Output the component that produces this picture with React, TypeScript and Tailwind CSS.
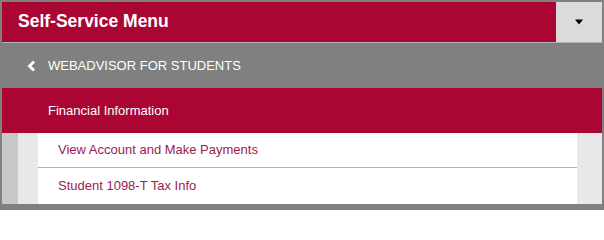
const links = ["View Account and Make Payments", "Student 1098-T Tax Info"];

export default function App() {
  return (
    <div className="w-[604px] h-[210px] bg-[#808080] pt-[2px] px-[2px] font-['Liberation_Sans',Arial,sans-serif] overflow-hidden">
      <div className="flex h-[40px]">
        <div className="flex-1 bg-[#ab0534] flex items-center pl-[16px]">
          <span className="text-white font-bold text-[17.5px] leading-none">Self-Service Menu</span>
        </div>
        <button className="w-[46px] bg-[#dbdbdb] flex items-center justify-center">
          <svg width="10" height="6" viewBox="0 0 10 6">
            <path d="M1 0.5 L9 0.5 L5 5.5 Z" fill="#000" />
          </svg>
        </button>
      </div>
      <div className="h-px bg-[#b4b4b4]" />
      <div className="h-[45px] bg-[#808080] flex items-center pl-[25px] text-white text-[13px]">
        <svg width="9" height="12" viewBox="0 0 9 12" className="mr-[12px]">
          <path d="M7 1.5 L2.5 6 L7 10.5" fill="none" stroke="#fff" strokeWidth="2.8" />
        </svg>
        <span>WEBADVISOR FOR STUDENTS</span>
      </div>
      <div className="h-[45px] bg-[#ab0534] flex items-center pl-[46px] text-white text-[13px]">
        Financial Information
      </div>
      <div className="flex h-[71px] bg-white">
        <div className="w-[16px] bg-[#c8c8c8]" />
        <div className="w-[20px] bg-[#e8e8e8]" />
        <div className="flex-1 flex flex-col">
          {links.map((l, i) => (
            <div
              key={l}
              className={`h-[35px] flex items-center pl-[20px] text-[13px] text-[#9b1a55] ${i === 0 ? "border-b border-[#b3b3b3]" : ""}`}
            >
              {l}
            </div>
          ))}
        </div>
        <div className="w-[25px] bg-[#e8e8e8]" />
      </div>
    </div>
  );
}
